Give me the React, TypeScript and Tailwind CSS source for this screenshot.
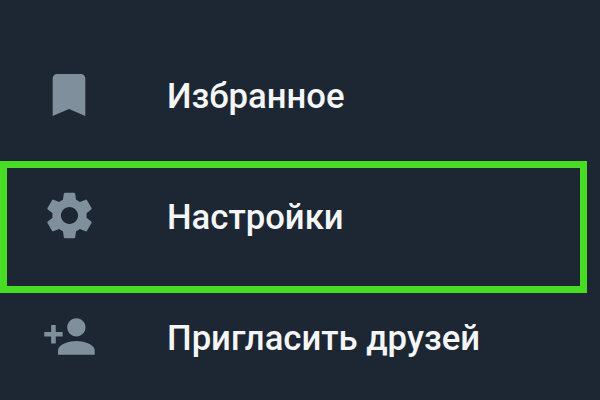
import React from 'react'

const iconColor = '#7f909c'

function BookmarkIcon() {
  return (
    <svg viewBox="0 0 24 24" className="w-[56px] h-[56px]" fill={iconColor}>
      <path d="M17 3H7c-1.1 0-2 .9-2 2v16l7-3 7 3V5c0-1.1-.9-2-2-2z" />
    </svg>
  )
}

function GearIcon() {
  return (
    <svg viewBox="0 0 24 24" className="w-[57px] h-[57px]" fill={iconColor}>
      <path d="M19.14 12.94c.04-.3.06-.61.06-.94 0-.32-.02-.64-.07-.94l2.03-1.58c.18-.14.23-.41.12-.61l-1.92-3.32c-.12-.22-.37-.29-.59-.22l-2.39.96c-.5-.38-1.03-.7-1.62-.94l-.36-2.54c-.04-.24-.24-.41-.48-.41h-3.84c-.24 0-.43.17-.47.41l-.36 2.54c-.59.24-1.13.57-1.62.94l-2.39-.96c-.22-.08-.47 0-.59.22L2.74 8.87c-.12.21-.08.47.12.61l2.03 1.58c-.05.3-.09.63-.09.94s.02.64.07.94l-2.03 1.58c-.18.14-.23.41-.12.61l1.92 3.32c.12.22.37.29.59.22l2.39-.96c.5.38 1.03.7 1.62.94l.36 2.54c.05.24.24.41.48.41h3.84c.24 0 .44-.17.47-.41l.36-2.54c.59-.24 1.13-.56 1.62-.94l2.39.96c.22.08.47 0 .59-.22l1.92-3.32c.12-.22.07-.47-.12-.61l-2.01-1.58zM12 15.6c-1.98 0-3.6-1.62-3.6-3.6s1.62-3.6 3.6-3.6 3.6 1.62 3.6 3.6-1.62 3.6-3.6 3.6z" />
    </svg>
  )
}

function PersonAddIcon() {
  return (
    <svg viewBox="0 0 24 24" className="w-[55px] h-[55px]" fill={iconColor}>
      <path d="M15 12c2.21 0 4-1.79 4-4s-1.79-4-4-4-4 1.79-4 4 1.79 4 4 4zm-9-2V7H4v3H1v2h3v3h2v-3h3v-2H6zm9 4c-2.67 0-8 1.34-8 4v2h16v-2c0-2.66-5.33-4-8-4z" />
    </svg>
  )
}

const items = [
  { label: 'Избранное', icon: <BookmarkIcon /> },
  { label: 'Настройки', icon: <GearIcon /> },
  { label: 'Пригласить друзей', icon: <PersonAddIcon /> },
]

export default function App() {
  return (
    <div className="relative w-[600px] h-[400px] overflow-hidden bg-[#1d2733] pt-[34px] font-['Roboto',sans-serif]">
      {items.map((item) => (
        <div key={item.label} className="flex items-center h-[121px]">
          <div className="flex items-center justify-center w-[167px] pr-[29px] shrink-0">{item.icon}</div>
          <span className="pt-[3px] text-[34.7px] font-medium text-[#f5f6f7] leading-none">{item.label}</span>
        </div>
      ))}
      {/* зелёная рамка поверх пункта */}
      <div className="absolute left-0 top-[161px] w-[587px] h-[132px] border-[7px] border-[#48dc24]" />
    </div>
  )
}
